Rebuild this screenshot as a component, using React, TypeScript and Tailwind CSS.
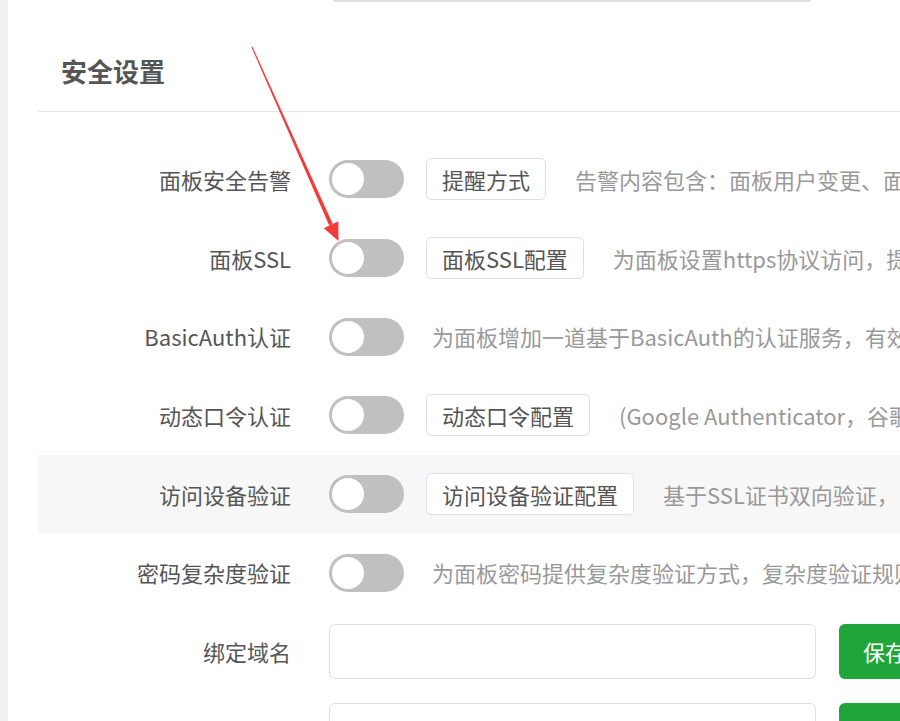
import React from 'react';

interface SettingRow {
  label: string;
  button?: string;
  desc: string;
  active?: boolean;
}

const rows: SettingRow[] = [
  { label: '面板安全告警', button: '提醒方式', desc: '告警内容包含：面板用户变更、面板日志删除、开启开发者模式' },
  { label: '面板SSL', button: '面板SSL配置', desc: '为面板设置https协议访问，提高面板访问安全性' },
  { label: 'BasicAuth认证', desc: '为面板增加一道基于BasicAuth的认证服务，有效防止面板被扫描发现' },
  { label: '动态口令认证', button: '动态口令配置', desc: '(Google Authenticator，谷歌身份验证器)' },
  { label: '访问设备验证', button: '访问设备验证配置', desc: '基于SSL证书双向验证，只允许已授权设备访问面板', active: true },
  { label: '密码复杂度验证', desc: '为面板密码提供复杂度验证方式，复杂度验证规则' },
];

const Toggle = () => (
  <div className="relative w-[75px] h-[38px] rounded-full bg-[#c0c0c0] shrink-0">
    <div className="absolute left-[3px] top-[3px] w-[32px] h-[32px] rounded-full bg-white" />
  </div>
);

const Arrow = () => (
  <svg className="absolute left-0 top-0 pointer-events-none" width="900" height="721">
    <polygon points="251.5,47.2 252.5,46.8 332.8,223.9 329.2,225.5" fill="#f23c3c" />
    <polygon points="323.7,228.2 338.3,221.3 338.6,241" fill="#f23c3c" />
  </svg>
);

export default function App() {
  return (
    <div className="relative flex w-[900px] h-[721px] overflow-hidden bg-white font-['Noto_Sans_CJK_SC',sans-serif]">
      <div className="w-[8px] shrink-0 bg-[#f1f1f1]" />
      <div className="flex-1 pl-[30px]">
        <div className="ml-[295px] w-[478px] h-[2px] rounded-b-[4px] bg-[#dedede]" />
        <div className="h-[110px] pt-[28px] pl-[23px] flex items-center border-b border-[#e6e6e6]">
          <h2 className="text-[26px] font-bold text-[#555]">安全设置</h2>
        </div>

        <div className="mt-[28px]">
          {rows.map((row) => (
            <div
              key={row.label}
              className={`flex items-center h-[78.7px] whitespace-nowrap ${row.active ? 'bg-[#f7f7f7]' : ''}`}
            >
              <div className="w-[253px] shrink-0 text-right text-[22px] text-[#555]">{row.label}</div>
              <div className="ml-[38px]">
                <Toggle />
              </div>
              {row.button && (
                <button className="ml-[22px] h-[42px] px-[15px] shrink-0 rounded-[5px] border border-[#dcdfe6] bg-white text-[22px] text-[#555]">
                  {row.button}
                </button>
              )}
              <div className={`${row.button ? 'ml-[29px]' : 'ml-[28px]'} text-[22px] text-[#999]`}>{row.desc}</div>
            </div>
          ))}

          <div className="flex items-center h-[78.7px] whitespace-nowrap">
            <div className="w-[253px] shrink-0 text-right text-[22px] text-[#555]">绑定域名</div>
            <input className="ml-[38px] w-[487px] h-[55px] shrink-0 rounded-[6px] border border-[#dcdfe6] bg-white outline-none" />
            <button className="ml-[23px] h-[55px] px-[24px] shrink-0 rounded-[6px] bg-[#20a53a] text-[22px] text-white">保存</button>
          </div>
          <div className="flex items-center h-[78.7px] whitespace-nowrap">
            <div className="w-[253px] shrink-0 text-right text-[22px] text-[#555]">授权IP</div>
            <input className="ml-[38px] w-[487px] h-[55px] shrink-0 rounded-[6px] border border-[#dcdfe6] bg-white outline-none" />
            <button className="ml-[23px] h-[55px] px-[24px] shrink-0 rounded-[6px] bg-[#20a53a] text-[22px] text-white">保存</button>
          </div>
        </div>
      </div>
      <Arrow />
    </div>
  );
}
